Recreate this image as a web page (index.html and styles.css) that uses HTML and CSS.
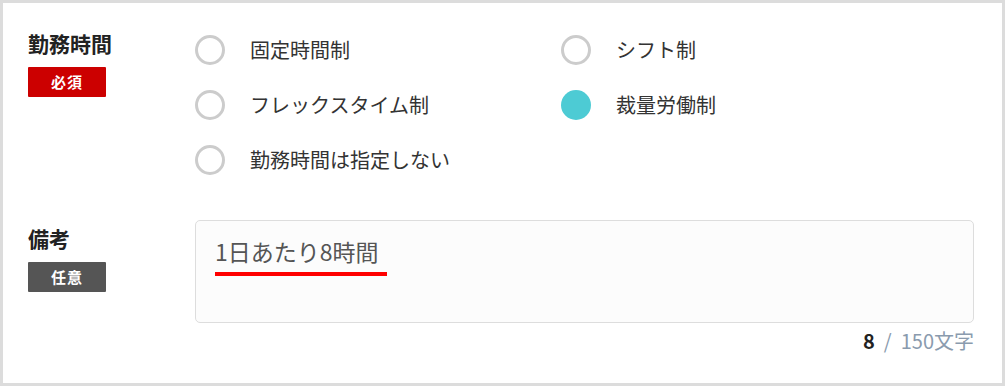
FILE: index.html
```html
<!DOCTYPE html>
<html lang="ja">
<head>
<meta charset="utf-8">
<link rel="stylesheet" href="styles.css">
</head>
<body>
<div class="panel">
  <div class="field field-work">
    <div class="label-col">
      <div class="label">勤務時間</div>
      <div class="badge badge-required">必須</div>
    </div>
    <div class="content">
      <div class="radios">
        <div class="radio"><span class="circle"></span><span class="rtext">固定時間制</span></div>
        <div class="radio"><span class="circle"></span><span class="rtext">シフト制</span></div>
        <div class="radio"><span class="circle"></span><span class="rtext">フレックスタイム制</span></div>
        <div class="radio"><span class="circle checked"></span><span class="rtext">裁量労働制</span></div>
        <div class="radio"><span class="circle"></span><span class="rtext">勤務時間は指定しない</span></div>
      </div>
    </div>
  </div>
  <div class="field field-note">
    <div class="label-col note-label">
      <div class="label">備考</div>
      <div class="badge badge-optional">任意</div>
    </div>
    <div class="content">
      <div class="textarea"><span class="note-text">1日あたり8時間</span></div>
      <div class="counter"><b class="count">8</b><span class="sep">/</span>150文字</div>
    </div>
  </div>
</div>
</body>
</html>
```

FILE: styles.css
```css
html, body {
  margin: 0;
  padding: 0;
  background: #fff;
}
body {
  font-family: "Noto Sans CJK JP", "Noto Sans", sans-serif;
  color: #333;
}
.panel {
  box-sizing: border-box;
  width: 1005px;
  height: 386px;
  border: 3px solid #dcdcdc;
  padding: 30px 28px 0 25px;
}
.field {
  display: flex;
}
.label-col {
  width: 167px;
  flex: none;
}
.label {
  font-size: 21px;
  line-height: 20px;
  font-weight: bold;
  color: #222;
}
.badge {
  margin-top: 14px;
  width: 78px;
  height: 30px;
  box-sizing: border-box;
  border-radius: 1px;
  color: #fff;
  font-size: 15px;
  font-weight: bold;
  line-height: 29px;
  text-align: center;
  letter-spacing: 1px;
}
.badge-required { background: #cc0000; }
.badge-optional { background: #555555; }
.content {
  flex: 1;
}
.radios {
  margin-top: 2px;
  display: grid;
  grid-template-columns: 366px 1fr;
  row-gap: 25px;
}
.radio {
  display: flex;
  align-items: center;
  height: 30px;
}
.circle {
  box-sizing: border-box;
  width: 30px;
  height: 30px;
  border-radius: 50%;
  border: 3px solid #cccccc;
  flex: none;
}
.circle.checked {
  border: none;
  background: #4dcbd4;
}
.rtext {
  margin-left: 25px;
  font-size: 20px;
  line-height: 24px;
  color: #333;
}
.field-note {
  margin-top: 45px;
}
.note-label {
  padding-top: 8px;
}
.textarea {
  box-sizing: border-box;
  height: 103px;
  border: 1px solid #dddddd;
  border-radius: 5px;
  background: #fcfcfc;
  padding: 16px 0 0 19px;
}
.note-text {
  display: inline-block;
  font-size: 23px;
  line-height: 28px;
  color: #555;
  padding-right: 8px;
  padding-bottom: 7px;
  border-bottom: 4px solid #ff0000;
}
.counter {
  margin-top: 6px;
  text-align: right;
  font-size: 20px;
  line-height: 24px;
  color: #8a9bae;
}
.count {
  color: #222;
  font-weight: bold;
}
.sep {
  margin: 0 9px;
}
```
